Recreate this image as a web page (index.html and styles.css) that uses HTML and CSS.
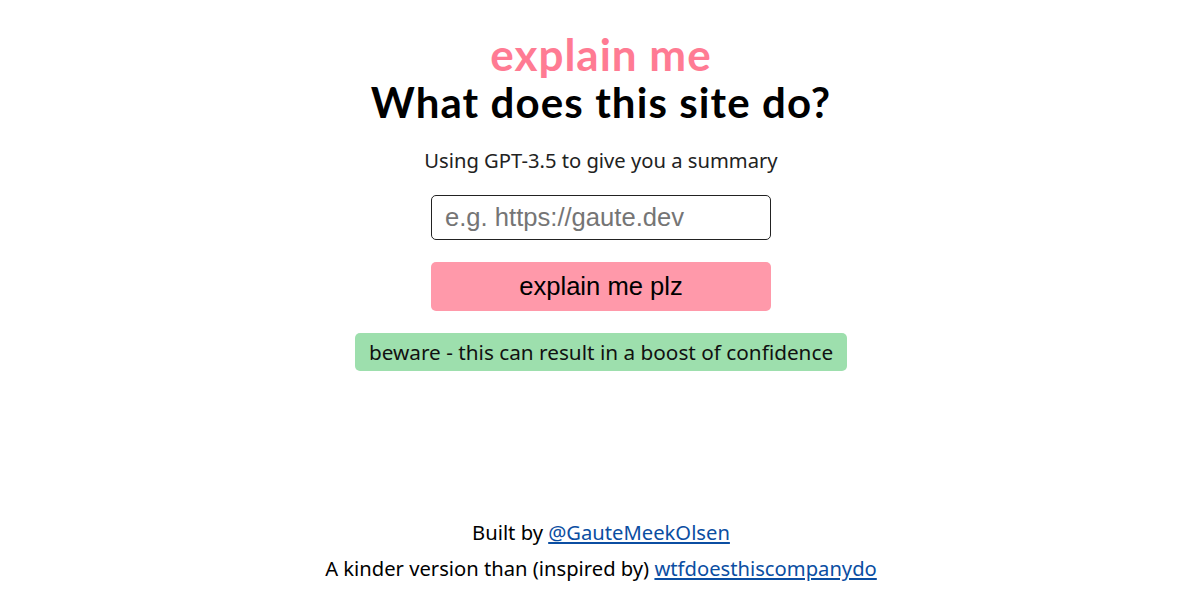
FILE: index.html
```html
<!DOCTYPE html>
<html>
<head>
<meta charset="utf-8">
<link rel="stylesheet" href="styles.css">
</head>
<body>
<div class="page">
  <main class="main">
    <div class="brand">explain me</div>
    <h1 class="title">What does this site do?</h1>
    <p class="sub">Using GPT-3.5 to give you a summary</p>
    <form class="form">
      <input class="url" type="text" placeholder="e.g. https://gaute.dev">
      <button class="btn" type="button">explain me plz</button>
    </form>
    <div class="warn">beware - this can result in a boost of confidence</div>
  </main>
  <footer class="footer">
    <p class="fline">Built by <a href="#">@GauteMeekOlsen</a></p>
    <p class="fline">A kinder version than (inspired by) <a href="#">wtfdoesthiscompanydo</a></p>
  </footer>
</div>
</body>
</html>
```
FILE: styles.css
```css
* { box-sizing: border-box; }
html, body { margin: 0; padding: 0; background: #fff; }
body { font-family: "Noto Sans", "DejaVu Sans", sans-serif; color: #111; }
.page { height: 600px; display: flex; flex-direction: column; align-items: center; padding-left: 2px; }
.main { display: flex; flex-direction: column; align-items: center; padding-top: 30px; }
.brand { font-family: Lato, "Noto Sans", sans-serif; color: #ff7b93; font-size: 44px; font-weight: 700; line-height: 48px; letter-spacing: 1px; }
.title { font-family: Lato, "Noto Sans", sans-serif; margin: 0; font-size: 42px; font-weight: 700; line-height: 48px; letter-spacing: 1.1px; color: #000; }
.sub { margin: 21px 0 0; font-size: 20.2px; line-height: 26px; color: #222; }
.form { display: flex; flex-direction: column; align-items: center; margin-top: 22px; gap: 22px; }
.url { width: 340px; height: 45px; border: 1px solid #222; border-radius: 5px; padding: 0 13px; font-family: "Liberation Sans", Arial, sans-serif; font-size: 25.6px; color: #222; outline: none; }
.url::placeholder { color: #757575; }
.btn { width: 340px; height: 49px; border: none; border-radius: 5px; background: #ff99aa; font-family: "Liberation Sans", Arial, sans-serif; font-size: 25.6px; color: #000; }
.warn { margin-top: 22px; background: #9ddfad; border-radius: 5px; padding: 0 14px; height: 38px; line-height: 38px; font-size: 20.75px; color: #111; }
.footer { margin-top: auto; padding-bottom: 19px; display: flex; flex-direction: column; align-items: center; gap: 10px; }
.fline { margin: 0; font-size: 20.2px; line-height: 26px; color: #000; }
.fline a { color: #0b4ea2; }
```
